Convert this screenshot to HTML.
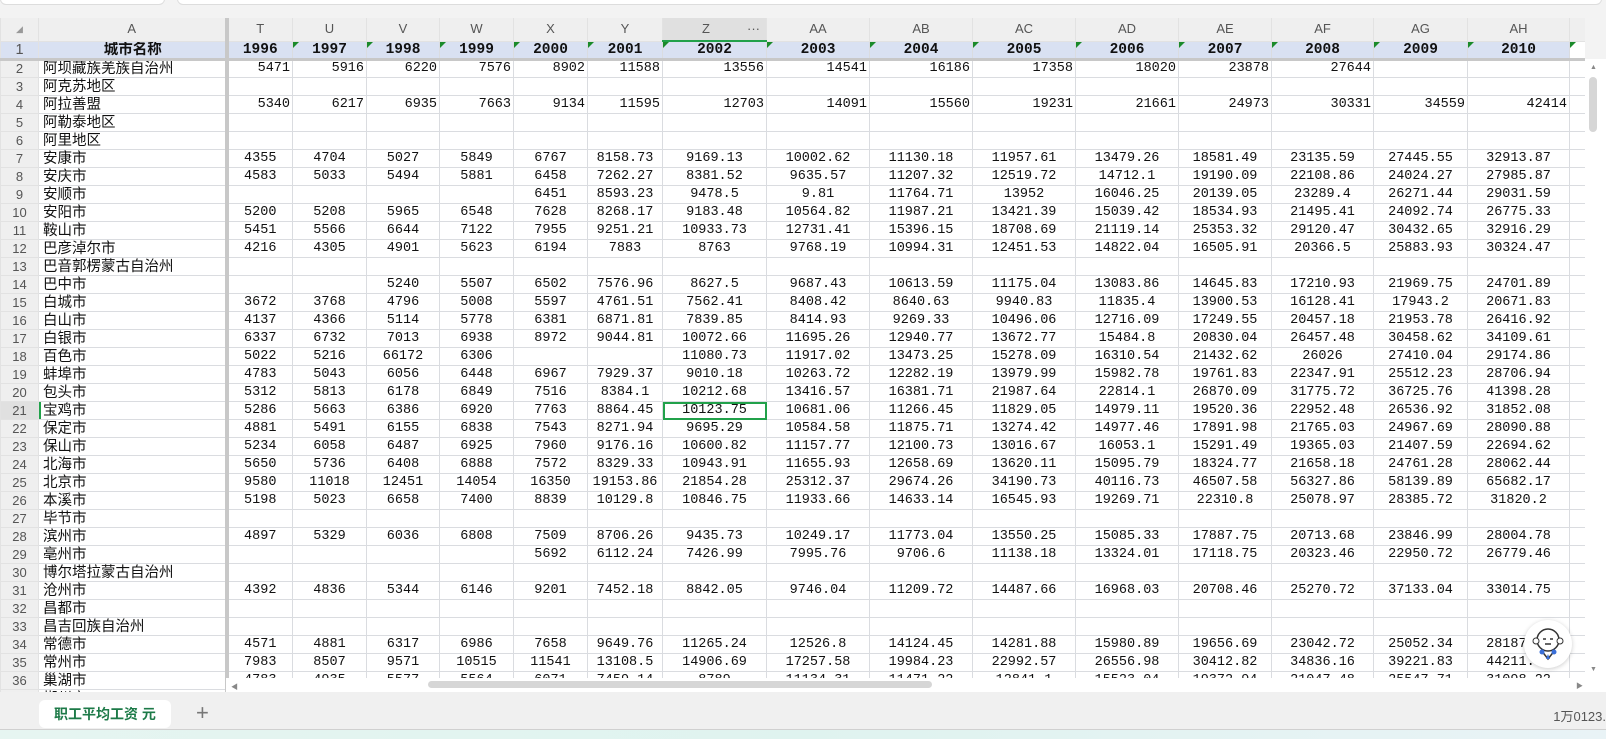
<!DOCTYPE html>
<html><head><meta charset="utf-8">
<style>
*{margin:0;padding:0;box-sizing:border-box}
body{width:1606px;height:739px;overflow:hidden;background:#f3f3f3;position:relative;font-family:"Liberation Sans","Noto Sans CJK SC",sans-serif}
.topbox{position:absolute;top:-10px;height:15px;background:#fff;border:1px solid #ddd;border-radius:6px}
#grid{position:absolute;left:0;top:18px;width:1585px;height:674px;overflow:hidden;background:#fff}
table{border-collapse:collapse;table-layout:fixed;width:1585px}
td{border:1px solid #dadce0;height:18px;font-family:"Liberation Mono","Noto Sans CJK SC",monospace;font-size:13.5px;color:#111;text-align:center;white-space:nowrap;overflow:hidden;line-height:16px;padding:0 2px}
tr.h td{height:23px;background:#efefef;color:#555;font-family:"Liberation Sans",sans-serif;font-size:13px;border-color:#e2e2e2;border-top:none}
tr.y td{background:#d9e1f2;font-weight:bold;font-size:14.5px;border-bottom:3px solid #c8c8c8;position:relative}
td.n{background:#efefef;color:#555;font-family:"Liberation Sans",sans-serif;font-size:13px;border-color:#e2e2e2}
td.a{text-align:left;font-family:"Liberation Sans","Noto Sans CJK SC",sans-serif;font-size:14.5px;border-right:4px solid #c8c8c8;padding-left:4px}
tr.r td{text-align:right}
tr.r td.n{text-align:center}
tr.r td.a{text-align:left}
.tri{position:absolute;left:0;top:0;width:0;height:0;border-top:6px solid #1a8a2a;border-right:6px solid transparent}
td.sel{outline:2px solid #21a14a;outline-offset:-2px}
.hsb{position:absolute;left:226px;top:678px;width:1359px;height:14px;background:#fff}
</style></head><body>
<div class="topbox" style="left:0;width:165px"></div>
<div class="topbox" style="left:177px;width:1425px"></div>
<div id="grid">
<table>
<colgroup><col style="width:38px"><col style="width:188px"><col style="width:66px"><col style="width:74px"><col style="width:73px"><col style="width:74px"><col style="width:74px"><col style="width:75px"><col style="width:104px"><col style="width:103px"><col style="width:103px"><col style="width:103px"><col style="width:103px"><col style="width:93px"><col style="width:102px"><col style="width:94px"><col style="width:102px"><col style="width:16px"></colgroup>
<tr class="h"><td style="font-size:9px;color:#999">◢</td><td style="border-right:4px solid #c8c8c8">A</td><td>T</td><td>U</td><td>V</td><td>W</td><td>X</td><td>Y</td><td style="background:#e0e0e0;border-bottom:2px solid #21a14a">Z <span style="float:right;margin-right:4px">···</span></td><td>AA</td><td>AB</td><td>AC</td><td>AD</td><td>AE</td><td>AF</td><td>AG</td><td>AH</td><td></td></tr>
<tr class="y"><td class="n" style="font-weight:normal">1</td><td class="a" style="text-align:center">城市名称</td><td>1996</td><td><i class="tri"></i>1997</td><td><i class="tri"></i>1998</td><td><i class="tri"></i>1999</td><td><i class="tri"></i>2000</td><td><i class="tri"></i>2001</td><td><i class="tri"></i>2002</td><td><i class="tri"></i>2003</td><td><i class="tri"></i>2004</td><td><i class="tri"></i>2005</td><td><i class="tri"></i>2006</td><td><i class="tri"></i>2007</td><td><i class="tri"></i>2008</td><td><i class="tri"></i>2009</td><td><i class="tri"></i>2010</td><td style="background:#fff"><i class="tri"></i></td></tr>
<tr class="r"><td class="n">2</td><td class="a">阿坝藏族羌族自治州</td><td>5471</td><td>5916</td><td>6220</td><td>7576</td><td>8902</td><td>11588</td><td>13556</td><td>14541</td><td>16186</td><td>17358</td><td>18020</td><td>23878</td><td>27644</td><td></td><td></td><td></td></tr>
<tr><td class="n">3</td><td class="a">阿克苏地区</td><td></td><td></td><td></td><td></td><td></td><td></td><td></td><td></td><td></td><td></td><td></td><td></td><td></td><td></td><td></td><td></td></tr>
<tr class="r"><td class="n">4</td><td class="a">阿拉善盟</td><td>5340</td><td>6217</td><td>6935</td><td>7663</td><td>9134</td><td>11595</td><td>12703</td><td>14091</td><td>15560</td><td>19231</td><td>21661</td><td>24973</td><td>30331</td><td>34559</td><td>42414</td><td></td></tr>
<tr><td class="n">5</td><td class="a">阿勒泰地区</td><td></td><td></td><td></td><td></td><td></td><td></td><td></td><td></td><td></td><td></td><td></td><td></td><td></td><td></td><td></td><td></td></tr>
<tr><td class="n">6</td><td class="a">阿里地区</td><td></td><td></td><td></td><td></td><td></td><td></td><td></td><td></td><td></td><td></td><td></td><td></td><td></td><td></td><td></td><td></td></tr>
<tr><td class="n">7</td><td class="a">安康市</td><td>4355</td><td>4704</td><td>5027</td><td>5849</td><td>6767</td><td>8158.73</td><td>9169.13</td><td>10002.62</td><td>11130.18</td><td>11957.61</td><td>13479.26</td><td>18581.49</td><td>23135.59</td><td>27445.55</td><td>32913.87</td><td></td></tr>
<tr><td class="n">8</td><td class="a">安庆市</td><td>4583</td><td>5033</td><td>5494</td><td>5881</td><td>6458</td><td>7262.27</td><td>8381.52</td><td>9635.57</td><td>11207.32</td><td>12519.72</td><td>14712.1</td><td>19190.09</td><td>22108.86</td><td>24024.27</td><td>27985.87</td><td></td></tr>
<tr><td class="n">9</td><td class="a">安顺市</td><td></td><td></td><td></td><td></td><td>6451</td><td>8593.23</td><td>9478.5</td><td>9.81</td><td>11764.71</td><td>13952</td><td>16046.25</td><td>20139.05</td><td>23289.4</td><td>26271.44</td><td>29031.59</td><td></td></tr>
<tr><td class="n">10</td><td class="a">安阳市</td><td>5200</td><td>5208</td><td>5965</td><td>6548</td><td>7628</td><td>8268.17</td><td>9183.48</td><td>10564.82</td><td>11987.21</td><td>13421.39</td><td>15039.42</td><td>18534.93</td><td>21495.41</td><td>24092.74</td><td>26775.33</td><td></td></tr>
<tr><td class="n">11</td><td class="a">鞍山市</td><td>5451</td><td>5566</td><td>6644</td><td>7122</td><td>7955</td><td>9251.21</td><td>10933.73</td><td>12731.41</td><td>15396.15</td><td>18708.69</td><td>21119.14</td><td>25353.32</td><td>29120.47</td><td>30432.65</td><td>32916.29</td><td></td></tr>
<tr><td class="n">12</td><td class="a">巴彦淖尔市</td><td>4216</td><td>4305</td><td>4901</td><td>5623</td><td>6194</td><td>7883</td><td>8763</td><td>9768.19</td><td>10994.31</td><td>12451.53</td><td>14822.04</td><td>16505.91</td><td>20366.5</td><td>25883.93</td><td>30324.47</td><td></td></tr>
<tr><td class="n">13</td><td class="a">巴音郭楞蒙古自治州</td><td></td><td></td><td></td><td></td><td></td><td></td><td></td><td></td><td></td><td></td><td></td><td></td><td></td><td></td><td></td><td></td></tr>
<tr><td class="n">14</td><td class="a">巴中市</td><td></td><td></td><td>5240</td><td>5507</td><td>6502</td><td>7576.96</td><td>8627.5</td><td>9687.43</td><td>10613.59</td><td>11175.04</td><td>13083.86</td><td>14645.83</td><td>17210.93</td><td>21969.75</td><td>24701.89</td><td></td></tr>
<tr><td class="n">15</td><td class="a">白城市</td><td>3672</td><td>3768</td><td>4796</td><td>5008</td><td>5597</td><td>4761.51</td><td>7562.41</td><td>8408.42</td><td>8640.63</td><td>9940.83</td><td>11835.4</td><td>13900.53</td><td>16128.41</td><td>17943.2</td><td>20671.83</td><td></td></tr>
<tr><td class="n">16</td><td class="a">白山市</td><td>4137</td><td>4366</td><td>5114</td><td>5778</td><td>6381</td><td>6871.81</td><td>7839.85</td><td>8414.93</td><td>9269.33</td><td>10496.06</td><td>12716.09</td><td>17249.55</td><td>20457.18</td><td>21953.78</td><td>26416.92</td><td></td></tr>
<tr><td class="n">17</td><td class="a">白银市</td><td>6337</td><td>6732</td><td>7013</td><td>6938</td><td>8972</td><td>9044.81</td><td>10072.66</td><td>11695.26</td><td>12940.77</td><td>13672.77</td><td>15484.8</td><td>20830.04</td><td>26457.48</td><td>30458.62</td><td>34109.61</td><td></td></tr>
<tr><td class="n">18</td><td class="a">百色市</td><td>5022</td><td>5216</td><td>66172</td><td>6306</td><td></td><td></td><td>11080.73</td><td>11917.02</td><td>13473.25</td><td>15278.09</td><td>16310.54</td><td>21432.62</td><td>26026</td><td>27410.04</td><td>29174.86</td><td></td></tr>
<tr><td class="n">19</td><td class="a">蚌埠市</td><td>4783</td><td>5043</td><td>6056</td><td>6448</td><td>6967</td><td>7929.37</td><td>9010.18</td><td>10263.72</td><td>12282.19</td><td>13979.99</td><td>15982.78</td><td>19761.83</td><td>22347.91</td><td>25512.23</td><td>28706.94</td><td></td></tr>
<tr><td class="n">20</td><td class="a">包头市</td><td>5312</td><td>5813</td><td>6178</td><td>6849</td><td>7516</td><td>8384.1</td><td>10212.68</td><td>13416.57</td><td>16381.71</td><td>21987.64</td><td>22814.1</td><td>26870.09</td><td>31775.72</td><td>36725.76</td><td>41398.28</td><td></td></tr>
<tr><td class="n" style="background:#e0e0e0">21</td><td class="a" style="box-shadow:inset 2px 0 #21a14a">宝鸡市</td><td>5286</td><td>5663</td><td>6386</td><td>6920</td><td>7763</td><td>8864.45</td><td class="sel">10123.75</td><td>10681.06</td><td>11266.45</td><td>11829.05</td><td>14979.11</td><td>19520.36</td><td>22952.48</td><td>26536.92</td><td>31852.08</td><td></td></tr>
<tr><td class="n">22</td><td class="a">保定市</td><td>4881</td><td>5491</td><td>6155</td><td>6838</td><td>7543</td><td>8271.94</td><td>9695.29</td><td>10584.58</td><td>11875.71</td><td>13274.42</td><td>14977.46</td><td>17891.98</td><td>21765.03</td><td>24967.69</td><td>28090.88</td><td></td></tr>
<tr><td class="n">23</td><td class="a">保山市</td><td>5234</td><td>6058</td><td>6487</td><td>6925</td><td>7960</td><td>9176.16</td><td>10600.82</td><td>11157.77</td><td>12100.73</td><td>13016.67</td><td>16053.1</td><td>15291.49</td><td>19365.03</td><td>21407.59</td><td>22694.62</td><td></td></tr>
<tr><td class="n">24</td><td class="a">北海市</td><td>5650</td><td>5736</td><td>6408</td><td>6888</td><td>7572</td><td>8329.33</td><td>10943.91</td><td>11655.93</td><td>12658.69</td><td>13620.11</td><td>15095.79</td><td>18324.77</td><td>21658.18</td><td>24761.28</td><td>28062.44</td><td></td></tr>
<tr><td class="n">25</td><td class="a">北京市</td><td>9580</td><td>11018</td><td>12451</td><td>14054</td><td>16350</td><td>19153.86</td><td>21854.28</td><td>25312.37</td><td>29674.26</td><td>34190.73</td><td>40116.73</td><td>46507.58</td><td>56327.86</td><td>58139.89</td><td>65682.17</td><td></td></tr>
<tr><td class="n">26</td><td class="a">本溪市</td><td>5198</td><td>5023</td><td>6658</td><td>7400</td><td>8839</td><td>10129.8</td><td>10846.75</td><td>11933.66</td><td>14633.14</td><td>16545.93</td><td>19269.71</td><td>22310.8</td><td>25078.97</td><td>28385.72</td><td>31820.2</td><td></td></tr>
<tr><td class="n">27</td><td class="a">毕节市</td><td></td><td></td><td></td><td></td><td></td><td></td><td></td><td></td><td></td><td></td><td></td><td></td><td></td><td></td><td></td><td></td></tr>
<tr><td class="n">28</td><td class="a">滨州市</td><td>4897</td><td>5329</td><td>6036</td><td>6808</td><td>7509</td><td>8706.26</td><td>9435.73</td><td>10249.17</td><td>11773.04</td><td>13550.25</td><td>15085.33</td><td>17887.75</td><td>20713.68</td><td>23846.99</td><td>28004.78</td><td></td></tr>
<tr><td class="n">29</td><td class="a">亳州市</td><td></td><td></td><td></td><td></td><td>5692</td><td>6112.24</td><td>7426.99</td><td>7995.76</td><td>9706.6</td><td>11138.18</td><td>13324.01</td><td>17118.75</td><td>20323.46</td><td>22950.72</td><td>26779.46</td><td></td></tr>
<tr><td class="n">30</td><td class="a">博尔塔拉蒙古自治州</td><td></td><td></td><td></td><td></td><td></td><td></td><td></td><td></td><td></td><td></td><td></td><td></td><td></td><td></td><td></td><td></td></tr>
<tr><td class="n">31</td><td class="a">沧州市</td><td>4392</td><td>4836</td><td>5344</td><td>6146</td><td>9201</td><td>7452.18</td><td>8842.05</td><td>9746.04</td><td>11209.72</td><td>14487.66</td><td>16968.03</td><td>20708.46</td><td>25270.72</td><td>37133.04</td><td>33014.75</td><td></td></tr>
<tr><td class="n">32</td><td class="a">昌都市</td><td></td><td></td><td></td><td></td><td></td><td></td><td></td><td></td><td></td><td></td><td></td><td></td><td></td><td></td><td></td><td></td></tr>
<tr><td class="n">33</td><td class="a">昌吉回族自治州</td><td></td><td></td><td></td><td></td><td></td><td></td><td></td><td></td><td></td><td></td><td></td><td></td><td></td><td></td><td></td><td></td></tr>
<tr><td class="n">34</td><td class="a">常德市</td><td>4571</td><td>4881</td><td>6317</td><td>6986</td><td>7658</td><td>9649.76</td><td>11265.24</td><td>12526.8</td><td>14124.45</td><td>14281.88</td><td>15980.89</td><td>19656.69</td><td>23042.72</td><td>25052.34</td><td>28187.55</td><td></td></tr>
<tr><td class="n">35</td><td class="a">常州市</td><td>7983</td><td>8507</td><td>9571</td><td>10515</td><td>11541</td><td>13108.5</td><td>14906.69</td><td>17257.58</td><td>19984.23</td><td>22992.57</td><td>26556.98</td><td>30412.82</td><td>34836.16</td><td>39221.83</td><td>44211.39</td><td></td></tr>
<tr><td class="n">36</td><td class="a">巢湖市</td><td>4783</td><td>4935</td><td>5577</td><td>5564</td><td>6071</td><td>7459.14</td><td>8789</td><td>11134.31</td><td>11471.22</td><td>12841.1</td><td>15523.04</td><td>19372.94</td><td>21047.48</td><td>25547.71</td><td>31098.22</td><td></td></tr>
<tr><td class="n">37</td><td class="a">郴州市</td><td></td><td></td><td></td><td></td><td></td><td></td><td></td><td></td><td></td><td></td><td></td><td></td><td></td><td></td><td></td><td></td></tr>
</table>
</div>
<div class="hsb"></div>
<div style="position:absolute;left:231px;top:682px;font-size:7px;color:#888">◀</div>
<div style="position:absolute;left:428px;top:681px;width:504px;height:7px;background:#d6d6d6;border-radius:4px"></div>
<div style="position:absolute;left:1576px;top:681px;font-size:7px;color:#888">▶</div>
<div style="position:absolute;left:1585px;top:59px;width:21px;height:633px;background:#fff"></div>
<div style="position:absolute;left:1590px;top:64px;font-size:7px;color:#888">▲</div>
<div style="position:absolute;left:1589px;top:77px;width:8px;height:55px;background:#d6d6d6;border-radius:4px"></div>
<div style="position:absolute;left:1590px;top:666px;font-size:7px;color:#888">▼</div>
<div style="position:absolute;left:1524px;top:620px;width:48px;height:48px;border-radius:50%;background:#fff;box-shadow:0 1px 5px rgba(0,0,0,.2)">
<svg width="48" height="48" viewBox="0 0 48 48"><circle cx="24" cy="20" r="11" fill="#fff" stroke="#333" stroke-width="1.5"/><circle cx="12" cy="21" r="3" fill="#fff" stroke="#333"/><circle cx="36" cy="21" r="3" fill="#fff" stroke="#333"/><path d="M19 19h3M26 19h3M21 24h6" stroke="#333" stroke-width="1.5"/><path d="M17 30l7 9 7-9" fill="none" stroke="#333" stroke-width="1.5"/><circle cx="18" cy="32" r="2.5" fill="#3a6fd8"/><circle cx="30" cy="32" r="2.5" fill="#3a6fd8"/><path d="M24 34l-2 5h4z" fill="#3a6fd8"/></svg></div>
<div style="position:absolute;left:0;top:692px;width:1606px;height:37px;background:#f0f0f0"></div>
<div style="position:absolute;left:39px;top:700px;width:132px;height:28px;background:#fff;border-radius:6px;color:#1d7a48;font-weight:bold;font-size:14px;line-height:28px;text-align:center;font-family:'Liberation Sans','Noto Sans CJK SC',sans-serif">职工平均工资 元</div>
<div style="position:absolute;left:196px;top:700px;font-size:22px;color:#777;line-height:26px">+</div>
<div style="position:absolute;right:0;top:706px;font-size:13px;color:#555;font-family:'Liberation Sans','Noto Sans CJK SC',sans-serif">1万0123.</div>
<div style="position:absolute;left:0;top:729px;width:1606px;height:10px;background:linear-gradient(90deg,#e6f5f1,#dff3ef,#e9f3f6);border-top:1px solid #d0d0d0"></div>
</body></html>
